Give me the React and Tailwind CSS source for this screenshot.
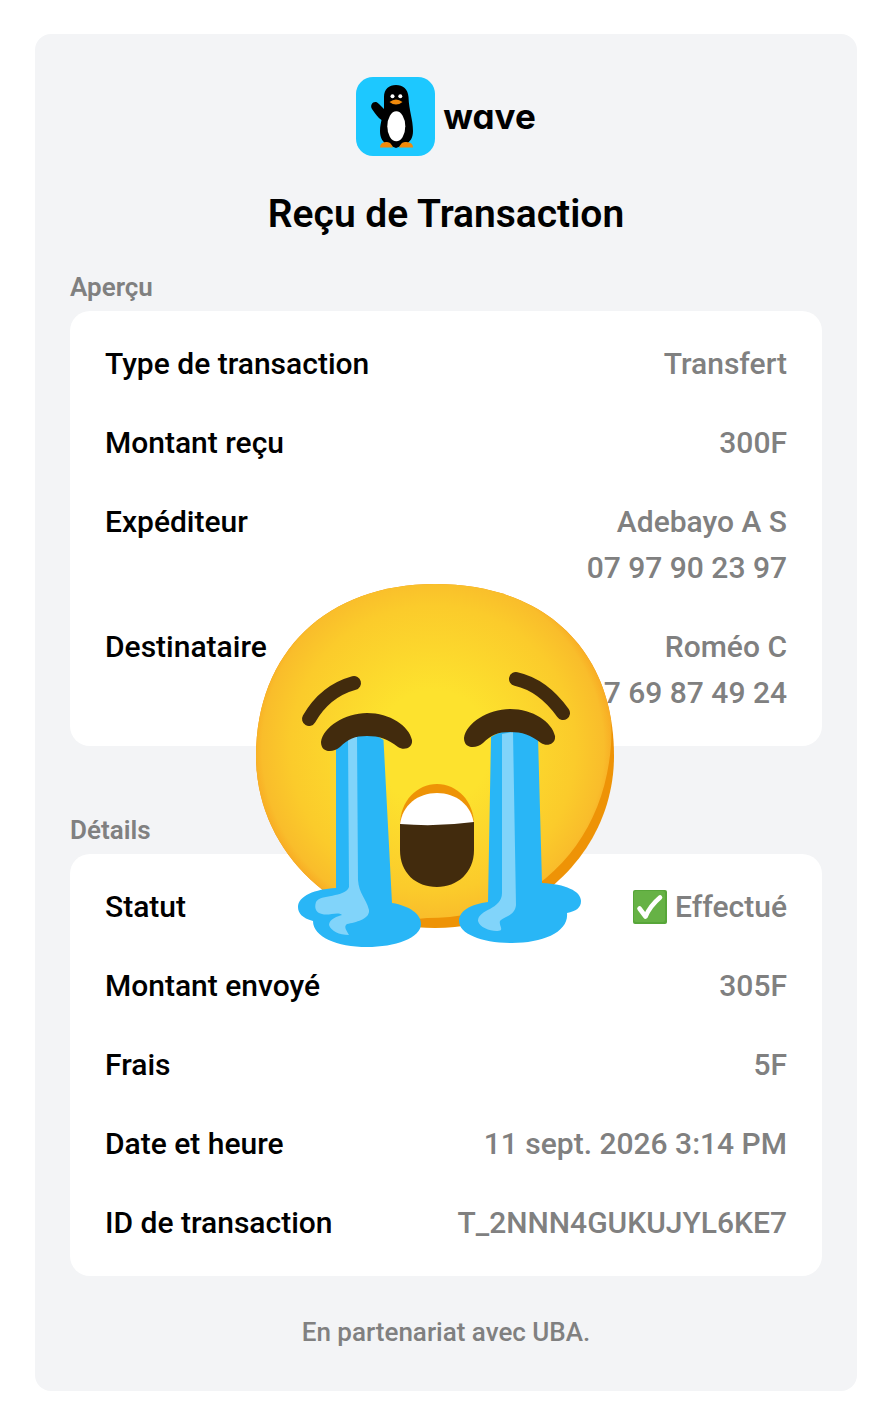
import React from 'react';

const OVERVIEW = [
    { label: 'Type de transaction', values: ['Transfert'] },
    { label: 'Montant reçu', values: ['300F'] },
    { label: 'Expéditeur', values: ['Adebayo A S', '07 97 90 23 97'] },
    { label: 'Destinataire', values: ['Roméo C', '07 69 87 49 24'] },
];

const DETAILS = [
    { label: 'Statut', values: ['Effectué'], done: true },
    { label: 'Montant envoyé', values: ['305F'] },
    { label: 'Frais', values: ['5F'] },
    { label: 'Date et heure', values: ['11 sept. 2026 3:14 PM'] },
    { label: 'ID de transaction', values: ['T_2NNN4GUKUJYL6KE7'] },
];

export default function App() {
    return (
        <div className="bg-white px-[35px] py-[34px] font-['Roboto',sans-serif]">
            <main className="relative rounded-2xl bg-[#f3f4f6] px-[35px] pt-[43px] pb-[43px]">
                <header className="flex flex-col items-center">
                    <div className="flex items-center gap-2">
                        <PenguinLogo />
                        <span className="font-['Inter',sans-serif] text-[35px] font-bold leading-none text-black [font-feature-settings:'cv11']">
                            wave
                        </span>
                    </div>
                    <h1 className="mt-[34px] text-[39px] font-semibold leading-[48px] text-black">
                        Reçu de Transaction
                    </h1>
                </header>

                <Section title="Aperçu" rows={OVERVIEW} className="mt-[33px]" />
                <Section title="Détails" rows={DETAILS} className="mt-[68px]" />

                <footer className="mt-10 text-center text-[26px] font-medium leading-8 text-[#808080]">
                    En partenariat avec UBA.
                </footer>

                <CryingFace />
            </main>
        </div>
    );
}

function Section({ title, rows, className }) {
    return (
        <section className={className}>
            <h2 className="mb-2 text-[26px] font-semibold leading-8 text-[#808080]">{title}</h2>
            <dl className="flex flex-col gap-[33px] rounded-[20px] bg-white px-[35px] py-[30px] text-[30px] font-medium leading-[46px]">
                {rows.map((row) => (
                    <div key={row.label} className="flex justify-between">
                        <dt className="text-black">{row.label}</dt>
                        <dd className="text-right text-[#808080]">
                            {row.values.map((value) => (
                                <div key={value} className="flex items-center justify-end gap-2">
                                    {row.done && <CheckBadge />}
                                    {value}
                                </div>
                            ))}
                        </dd>
                    </div>
                ))}
            </dl>
        </section>
    );
}

function CheckBadge() {
    return (
        <svg width="34" height="34" viewBox="0 0 34 34" aria-hidden="true">
            <rect width="34" height="34" rx="2" fill="#57a639" />
            <rect x="1" y="1" width="31" height="31" rx="2" fill="#66b245" />
            <path
                d="M6.5 18.5 L12.5 26.5 Q17 16 27 7.5"
                fill="none"
                stroke="#fff"
                strokeWidth="4.6"
                strokeLinecap="round"
                strokeLinejoin="round"
            />
        </svg>
    );
}

function PenguinLogo() {
    return (
        <svg width="79" height="79" viewBox="0 0 79 79" aria-hidden="true">
            <rect width="79" height="79" rx="17" fill="#1dc8ff" />
            {/* body and wing */}
            <path
                d="M28 20 C28 12 33 8 40 8 C47 8 52 12 52.5 20 C53 34 57 42 57 54 C57 61 54 65 50 67 L40 71 L30 67 C26 64 24 60 24 54 C24 49 25 46 25.5 43 C22 41 19 36 16 32 C13 27 19 22 23 27 L28 32 Z"
                fill="#000"
            />
            <ellipse cx="40.3" cy="49.3" rx="9" ry="15" fill="#fff" />
            <circle cx="36.5" cy="19.3" r="2" fill="#fff" />
            <circle cx="44.3" cy="19.3" r="2" fill="#fff" />
            <path d="M33.5 25 Q40 20 46.5 25 Q40 30 33.5 25 Z" fill="#f08a0c" />
            {/* feet */}
            <path d="M24 70.5 C24 66 28 65 31 65 C34 65 36 68 37 70.5 Z" fill="#f08a0c" />
            <path d="M43 70.5 C44 68 46 65 49 65 C53 65 57 66 57 70.5 Z" fill="#f08a0c" />
        </svg>
    );
}

function CryingFace() {
    return (
        <svg
            className="absolute left-[215px] top-[542px]"
            width="370"
            height="376"
            viewBox="250 576 370 376"
            role="img"
            aria-label="Visage en larmes"
        >
            <defs>
                <radialGradient
                    id="face"
                    gradientUnits="userSpaceOnUse"
                    cx="433"
                    cy="748"
                    r="190"
                >
                    <stop offset="0.3" stopColor="#fde22e" />
                    <stop offset="0.75" stopColor="#fbcb2b" />
                    <stop offset="0.9" stopColor="#f9bd2b" />
                    <stop offset="1" stopColor="#f79a1c" />
                </radialGradient>
                <clipPath id="head">
                    <path d="M256 756 C256 652 327 584 435 584 C545 584 614 650 614 756 C614 851 534 928 435 928 C336 928 256 851 256 756 Z" />
                </clipPath>
            </defs>

            <g clipPath="url(#head)">
                <rect x="250" y="576" width="370" height="376" fill="#ee9306" />
                <path
                    d="M250 756 C250 640 321 578 435 578 C553 578 618 650 611 745 C604 842 536 918 427 918 C326 930 250 851 250 756 Z"
                    fill="url(#face)"
                />
            </g>

            {/* mouth */}
            <path d="M400 825 C400 801 417 784 437 784 C457 784 474 801 474 825 Z" fill="#ee9306" />
            <path d="M400 825 C402 805 418 793 437 793 C456 793 472 805 474 825 L437 828 Z" fill="#fff" />
            <path
                d="M400 824 Q437 827 474 822 L474 850 C474 873 457 887 437 887 C416 887 400 873 400 850 Z"
                fill="#422b0d"
            />

            {/* tears */}
            <path
                d="M336 740 Q361 724 383.5 740 L392 903 C410 906 421 914 421 924 C421 938 395 947 367 947 C337 947 313 937 313 921 C302 918 298 913 298 907 C298 896 315 889 336 888 Z"
                fill="#29b6f6"
            />
            <path
                d="M348 738 L357 736 L358 880 C359 894 366 898 369 910 C370 919 356 922 347 924 C343 927 347 931 349 935 C339 935 331 931 329 925 C329 919 338 916 342 915 C338 911 329 916 322 914 C316 913 314 908 316 902 C320 894 345 898 349 887 Z"
                fill="#81d4fa"
            />
            <path
                d="M491 737 Q515 722 538 737 L542 883 C565 884 581 891 581 901 C581 908 576 911 567 913 C569 932 543 943 512 943 C482 943 459 934 459 921 C459 911 471 904 488 902 Z"
                fill="#29b6f6"
            />
            <path
                d="M502 734 L513 732 L516 905 C515 916 503 917 500 921 C499 925 502 927 501 930 C496 933 480 929 478 921 C478 909 502 910 502 893 Z"
                fill="#81d4fa"
            />

            {/* brows and closed eyes */}
            <g fill="none" stroke="#422b0d" strokeWidth="14" strokeLinecap="round">
                <path d="M309 719 Q325 691 354 683" />
                <path d="M516 679 Q543 685 563 713" />
            </g>
            <g fill="#422b0d">
                <path d="M321 742 C323 727 345 713 367 713 C390 713 409 726 412 740 C413 748 404 751 398 747 C388 739 379 736 367 736 C355 736 348 739 340 747 C333 753 321 753 321 742 Z" />
                <path d="M464 738 C466 723 488 709 510 709 C533 709 552 722 555 736 C556 744 547 747 541 743 C531 735 522 732 510 732 C498 732 491 735 483 743 C476 749 464 749 464 738 Z" />
            </g>
        </svg>
    );
}
